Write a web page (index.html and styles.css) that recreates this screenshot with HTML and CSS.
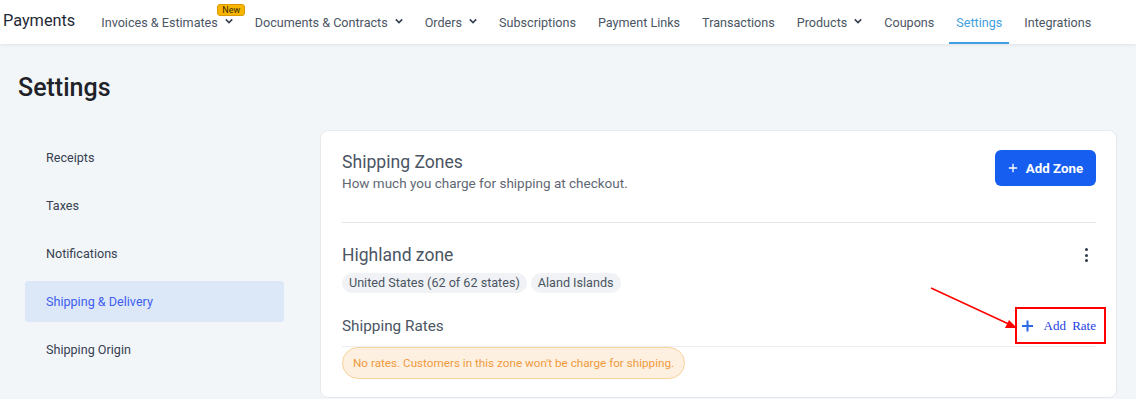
FILE: index.html
```html
<!DOCTYPE html>
<html lang="en">
<head>
  <meta charset="UTF-8" />
  <meta name="viewport" content="width=device-width, initial-scale=1.0"/>
  <title>Payments - Settings</title>
  <link rel="stylesheet" href="styles.css">
</head>
<body>
  <header class="topbar">
    <div class="brand">Payments</div>
    <nav>
      <ul>
        <li class="has-badge"><a href="#">Invoices &amp; Estimates <svg class="chev" viewBox="0 0 10 6"><path d="M1 1l4 4 4-4"/></svg></a><span class="badge">New</span></li>
        <li><a href="#">Documents &amp; Contracts <svg class="chev" viewBox="0 0 10 6"><path d="M1 1l4 4 4-4"/></svg></a></li>
        <li><a href="#">Orders <svg class="chev" viewBox="0 0 10 6"><path d="M1 1l4 4 4-4"/></svg></a></li>
        <li><a href="#">Subscriptions</a></li>
        <li><a href="#">Payment Links</a></li>
        <li><a href="#">Transactions</a></li>
        <li><a href="#">Products <svg class="chev" viewBox="0 0 10 6"><path d="M1 1l4 4 4-4"/></svg></a></li>
        <li><a href="#">Coupons</a></li>
        <li class="active"><a href="#">Settings</a></li>
        <li><a href="#">Integrations</a></li>
      </ul>
    </nav>
  </header>

  <main class="page">
    <h1>Settings</h1>
    <div class="layout">
      <aside class="side">
        <a href="#">Receipts</a>
        <a href="#">Taxes</a>
        <a href="#">Notifications</a>
        <a href="#" class="current">Shipping &amp; Delivery</a>
        <a href="#">Shipping Origin</a>
      </aside>

      <section class="card">
        <div class="card-head">
          <div>
            <h2>Shipping Zones</h2>
            <p>How much you charge for shipping at checkout.</p>
          </div>
          <button class="btn-primary">
            <svg viewBox="0 0 12 12"><path d="M6 1v10M1 6h10"/></svg>
            Add Zone
          </button>
        </div>

        <div class="zone">
          <div class="zone-title">
            <h3>Highland zone</h3>
            <span class="kebab"><i></i><i></i><i></i></span>
          </div>
          <div class="chips">
            <span>United States (62 of 62 states)</span>
            <span>Aland Islands</span>
          </div>
          <div class="rates-head">
            <h4>Shipping Rates</h4>
            <a href="#" class="add-rate">
              <svg viewBox="0 0 14 14"><path d="M7 1v12M1 7h12"/></svg>
              <span>Add Rate</span>
            </a>
          </div>
          <div class="no-rates">No rates. Customers in this zone won't be charge for shipping.</div>
        </div>

        <svg class="pointer" viewBox="0 0 100 50">
          <path d="M10 7L92 45" />
          <path class="tip" d="M96 47L84 47L88 39z" />
        </svg>
      </section>
    </div>
  </main>
</body>
</html>
```

FILE: styles.css
```css
body {
  font-family: Roboto, "Noto Sans", Arial, sans-serif;
  margin: 0; padding: 0;
  background: #f2f6f9;
  color: #374151;
  overflow: hidden;
}
.topbar {
  height: 44px;
  background: #fff;
  display: flex;
  align-items: center;
  box-shadow: 0 1px 3px rgba(0,0,0,0.08);
  position: relative;
  z-index: 2;
}
.brand {
  font-size: 16.3px;
  color: #1f2937;
  padding-left: 3px;
  margin-right: 19px;
  margin-top: -4px;
}
nav ul {
  list-style: none;
  display: flex;
  gap: 8px;
  margin: 0; padding: 0;
  height: 44px;
}
nav li {
  position: relative;
  display: flex;
  align-items: center;
}
nav li a {
  color: #4b5563;
  text-decoration: none;
  font-size: 12.6px;
  padding: 0 7px;
  height: 44px;
  display: flex;
  align-items: center;
  gap: 4px;
  box-sizing: border-box;
}
nav li.active a {
  color: #3f9fe0;
  border-bottom: 2px solid #3f9fe0;
  padding-top: 2px;
}
.chev {
  width: 8px; height: 6px;
  fill: none;
  stroke: #374151;
  stroke-width: 2;
  margin-left: 3px;
  margin-top: -2px;
}
.badge {
  position: absolute;
  left: 123px; top: 4px;
  background: #f7b500;
  border: 1px solid #d99a00;
  color: #3b2b00;
  font-size: 9px;
  line-height: 10px;
  padding: 0 4px;
  border-radius: 3px;
}

.page {
  padding: 0 19px 0 18px;
}
.page h1 {
  font-size: 25px;
  font-weight: 500;
  color: #1f2329;
  margin: 30px 0 28px;
  line-height: 28px;
}
.layout {
  display: flex;
  align-items: flex-start;
}
.side {
  width: 259px;
  margin-left: 7px;
  margin-right: 36px;
  padding-top: 7px;
  display: flex;
  flex-direction: column;
  gap: 7px;
}
.side a {
  height: 41px;
  line-height: 41px;
  padding-left: 21px;
  font-size: 12.6px;
  color: #374151;
  text-decoration: none;
  border-radius: 3px;
}
.side a.current {
  background: #dce8f8;
  color: #3f5ef0;
}

.card {
  flex: 1;
  background: #fff;
  border: 1px solid #e6eaee;
  border-radius: 8px;
  padding: 19px 20px 18px 21px;
  position: relative;
}
.card-head {
  display: flex;
  justify-content: space-between;
  align-items: flex-start;
  padding-bottom: 31px;
  border-bottom: 1px solid #e5e7eb;
}
.card-head h2 {
  font-size: 17.6px;
  font-weight: 400;
  color: #4b5563;
  margin: 2px 0 3px;
}
.card-head p {
  font-size: 13.5px;
  color: #5f6773;
  margin: 0;
}
.btn-primary {
  width: 101px; height: 36px;
  background: #155eef;
  color: #fff;
  border: none;
  border-radius: 6px;
  font-family: inherit;
  font-size: 13.3px;
  font-weight: bold;
  display: flex;
  align-items: center;
  justify-content: center;
  gap: 8px;
  cursor: pointer;
}
.btn-primary svg {
  width: 10px; height: 10px;
  stroke: #fff;
  stroke-width: 1.6;
}

.zone {
  padding-top: 21px;
}
.zone-title {
  display: flex;
  justify-content: space-between;
  align-items: center;
}
.zone-title h3 {
  font-size: 17.5px;
  font-weight: 400;
  color: #4b5563;
  margin: 0;
  line-height: 22px;
}
.kebab {
  display: flex;
  flex-direction: column;
  gap: 2.5px;
  margin-right: 8px;
}
.kebab i {
  width: 3px; height: 3px;
  background: #2f3a4a;
  border-radius: 50%;
}
.chips {
  display: flex;
  gap: 4px;
  margin-top: 7px;
}
.chips span {
  background: #f0f2f5;
  border-radius: 10px;
  font-size: 12.6px;
  color: #4b5563;
  height: 20px;
  line-height: 20px;
  padding: 0 7px;
}
.rates-head {
  display: flex;
  justify-content: space-between;
  align-items: center;
  margin-top: 12px;
  height: 42px;
  box-sizing: border-box;
  border-bottom: 1px solid #eceef1;
}
.rates-head h4 {
  font-size: 15.3px;
  font-weight: 400;
  color: #4b5563;
  margin: 0;
}
.add-rate {
  display: flex;
  align-items: center;
  gap: 10px;
  border: 2px solid #f00;
  padding: 0 8px 0 4px;
  height: 37px;
  box-sizing: border-box;
  margin-right: -10px;
  text-decoration: none;
  color: #1c3ee0;
  font-family: "Liberation Serif", "Times New Roman", serif;
  font-size: 13px;
  word-spacing: 3px;
}
.add-rate svg {
  width: 13px; height: 14px;
  stroke: #2d6be6;
  stroke-width: 2.2;
}
.no-rates {
  display: inline-block;
  background: #fdf0e1;
  border: 1px solid #f8d39c;
  color: #ef9a3d;
  font-size: 11.7px;
  border-radius: 16px;
  padding: 8px 10px 8px 10px;
}
.pointer {
  position: absolute;
  left: 600px; top: 150px;
  width: 100px; height: 50px;
  fill: none;
  stroke: #f00;
  stroke-width: 1.5;
  overflow: visible;
}
.pointer .tip {
  fill: #f00;
  stroke: none;
}
```
